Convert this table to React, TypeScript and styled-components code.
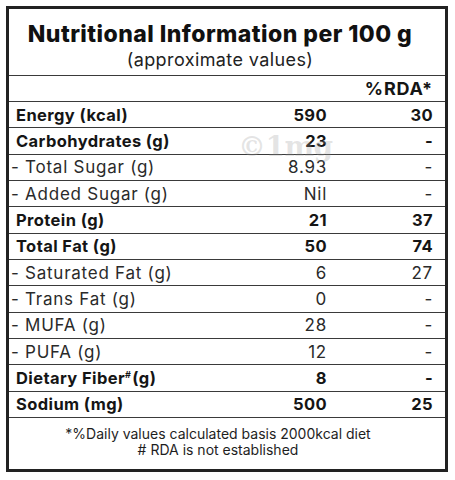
import React from "react";
import styled, { createGlobalStyle } from "styled-components";

const Global = createGlobalStyle`
  html, body { margin: 0; padding: 0; background: #fff; }
  body { font-family: Inter, "Liberation Sans", sans-serif; color: #1b1b1b; }
`;

const Page = styled.div`
  width: 455px;
  height: 480px;
  padding: 6px 7px 8px 6px;
  box-sizing: border-box;
  background: #fff;
`;

const Panel = styled.div`
  position: relative;
  border: 3px solid #222;
  height: 466px;
  box-sizing: border-box;
  display: flex;
  flex-direction: column;
`;

const Header = styled.div`
  display: flex;
  flex-direction: column;
  align-items: center;
  padding: 12px 14px 5px 0;
  gap: 3px;
  border-bottom: 1.5px solid #3a3a3a;
`;

const Title = styled.div`
  font-weight: 800;
  font-size: 23px;
  line-height: 26px;
  color: #111;
  letter-spacing: 0.45px;
`;

const Subtitle = styled.div`
  font-size: 18px;
  line-height: 20px;
  color: #222;
  letter-spacing: 0.4px;
`;

const Row = styled.div<{ $bold?: boolean }>`
  display: grid;
  grid-template-columns: 1fr 120px 118px;
  align-items: center;
  height: 26.33px;
  box-sizing: border-box;
  border-top: 1.5px solid #3a3a3a;
  font-size: ${(p) => (p.$bold ? "16.5px" : "17px")};
  letter-spacing: ${(p) => (p.$bold ? "0.4px" : "0.75px")};
  font-weight: ${(p) => (p.$bold ? 700 : 400)};
  color: ${(p) => (p.$bold ? "#151515" : "#2a2a2a")};
`;

const RdaHeadRow = styled.div`
  display: grid;
  grid-template-columns: 1fr 118px;
  align-items: center;
  height: 25px;
  box-sizing: border-box;
  font-size: 18px;
  letter-spacing: 0.8px;
  font-weight: 700;
  color: #151515;
`;

const Label = styled.span<{ $sub?: boolean }>`
  padding-left: ${(p) => (p.$sub ? "2px" : "7px")};
  white-space: pre;
`;

const Value = styled.span`
  text-align: right;
`;

const Rda = styled.span`
  text-align: right;
  padding-right: 12px;
`;

const Sup = styled.sup`
  font-size: 9px;
  vertical-align: 6px;
  line-height: 0;
  margin-right: 1px;
`;

const Body = styled.div`
  display: flex;
  flex-direction: column;
`;

const Footer = styled.div`
  flex: 1;
  border-top: 1.5px solid #3a3a3a;
  display: flex;
  flex-direction: column;
  align-items: center;
  padding: 8px 18px 0 0;
  font-size: 14px;
  line-height: 16px;
  color: #1e1e1e;
`;

const Watermark = styled.div`
  position: absolute;
  left: 229px;
  top: 121px;
  font-family: "DejaVu Serif", "Liberation Serif", serif;
  font-weight: 700;
  font-size: 28px;
  letter-spacing: -0.5px;
  color: rgba(160, 160, 160, 0.28);
  pointer-events: none;
`;

type Item = { label: string; value: string; rda: string; bold?: boolean; sub?: boolean; sup?: boolean };

const items: Item[] = [
  { label: "Energy (kcal)", value: "590", rda: "30", bold: true },
  { label: "Carbohydrates (g)", value: "23", rda: "-", bold: true },
  { label: "- Total Sugar (g)", value: "8.93", rda: "-", sub: true },
  { label: "- Added Sugar (g)", value: "Nil", rda: "-", sub: true },
  { label: "Protein (g)", value: "21", rda: "37", bold: true },
  { label: "Total Fat (g)", value: "50", rda: "74", bold: true },
  { label: "- Saturated Fat (g)", value: "6", rda: "27", sub: true },
  { label: "- Trans Fat (g)", value: "0", rda: "-", sub: true },
  { label: "- MUFA (g)", value: "28", rda: "-", sub: true },
  { label: "- PUFA (g)", value: "12", rda: "-", sub: true },
  { label: "Dietary Fiber", value: "8", rda: "-", bold: true, sup: true },
  { label: "Sodium (mg)", value: "500", rda: "25", bold: true },
];

export default function App() {
  return (
    <Page>
      <Global />
      <Panel>
        <Header>
          <Title>Nutritional Information per 100 g</Title>
          <Subtitle>(approximate values)</Subtitle>
        </Header>
        <Body>
          <RdaHeadRow>
            <span />
            <Rda>%RDA*</Rda>
          </RdaHeadRow>
          {items.map((it) => (
            <Row key={it.label} $bold={it.bold}>
              <Label $sub={it.sub}>
                {it.label}
                {it.sup && (
                  <>
                    <Sup>#</Sup>(g)
                  </>
                )}
              </Label>
              <Value>{it.value}</Value>
              <Rda>{it.rda}</Rda>
            </Row>
          ))}
        </Body>
        <Footer>
          <div>*%Daily values calculated basis 2000kcal diet</div>
          <div># RDA is not established</div>
        </Footer>
        <Watermark>©1mg</Watermark>
      </Panel>
    </Page>
  );
}
